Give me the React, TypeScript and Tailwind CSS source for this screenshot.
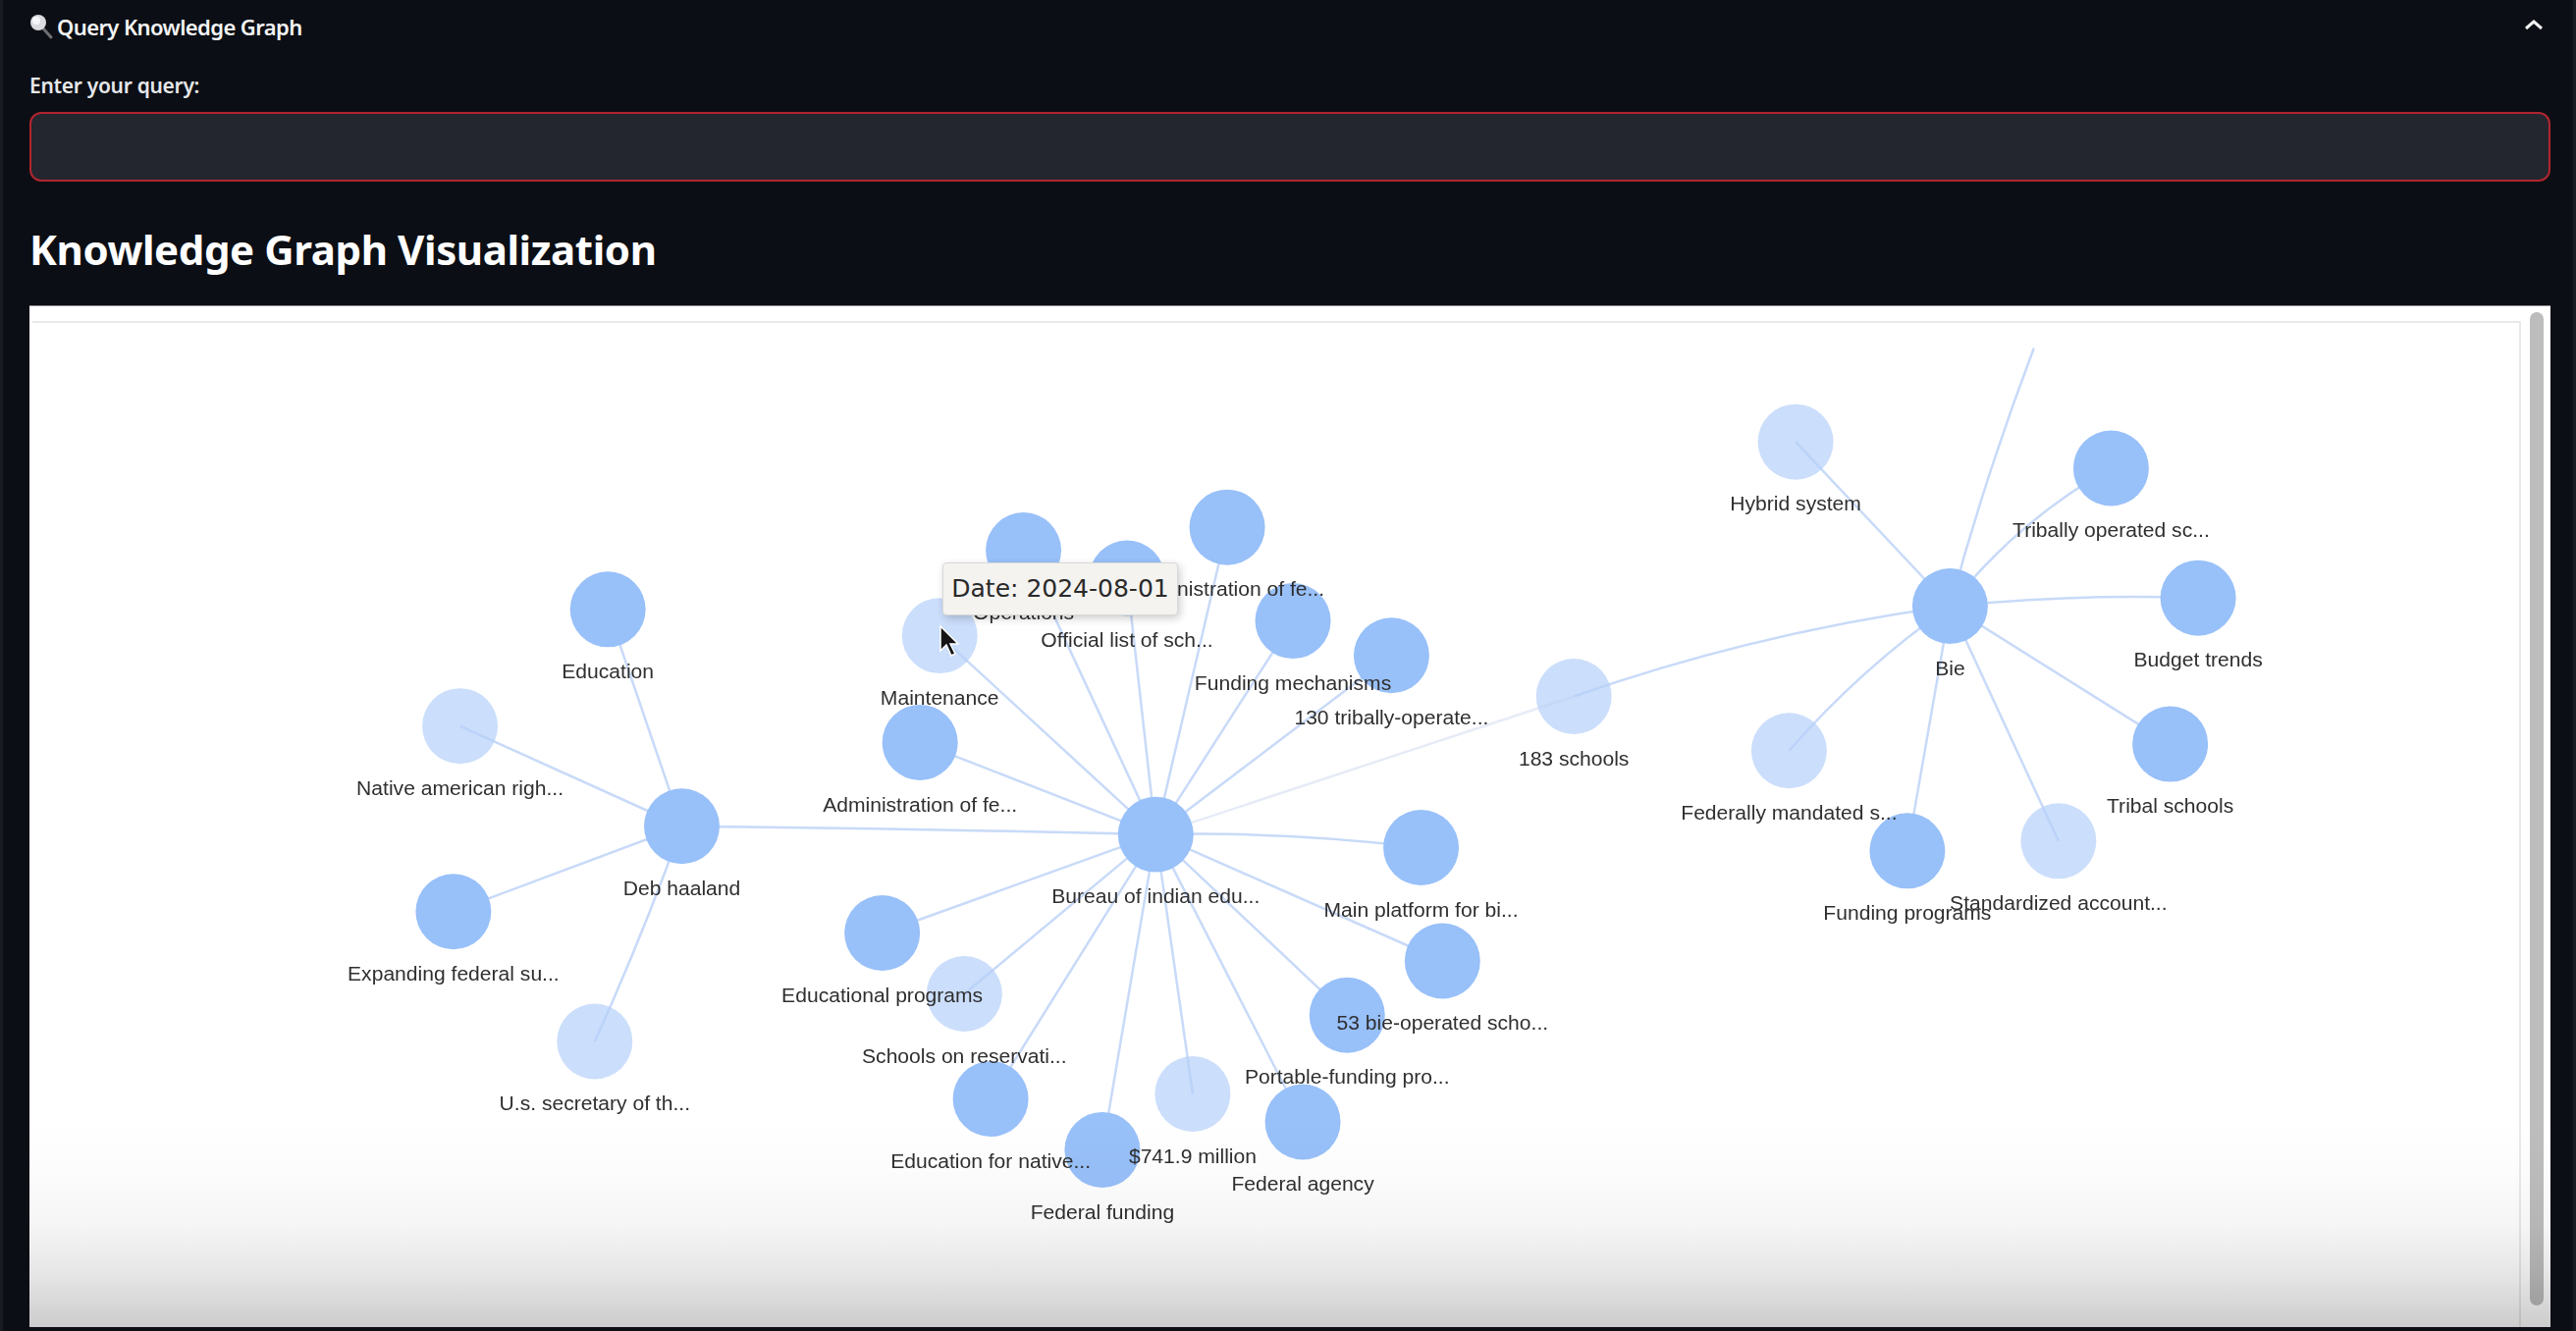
import React from "react";

const S = 2624 / 1568;
type P = { x: number; y: number };
type N = P & { t: string; light?: boolean; c?: number };

const bureau: N = { x: 703.5, y: 508, t: "Bureau of indian edu..." };
const deb: N = { x: 415, y: 503, t: "Deb haaland" };
const bie: N = { x: 1187, y: 369, t: "Bie" };
const schools: N = { x: 958, y: 424, t: "183 schools", light: true };

const bureauKids: N[] = [
  { x: 623, y: 335, t: "Operations" },
  { x: 686, y: 352, t: "Official list of sch..." },
  { x: 747, y: 321, t: "Administration of fe..." },
  { x: 787, y: 378, t: "Funding mechanisms" },
  { x: 847, y: 399, t: "130 tribally-operate..." },
  { x: 572, y: 387, t: "Maintenance", light: true },
  { x: 560, y: 452, t: "Administration of fe..." },
  { x: 865, y: 516, t: "Main platform for bi...", c: -6 },
  { x: 878, y: 585, t: "53 bie-operated scho..." },
  { x: 820, y: 618, t: "Portable-funding pro..." },
  { x: 793, y: 683, t: "Federal agency" },
  { x: 726, y: 666, t: "$741.9 million", light: true },
  { x: 671, y: 700, t: "Federal funding" },
  { x: 603, y: 669, t: "Education for native..." },
  { x: 587, y: 605, t: "Schools on reservati...", light: true },
  { x: 537, y: 568, t: "Educational programs" },
];
const debKids: N[] = [
  { x: 370, y: 371, t: "Education" },
  { x: 280, y: 442, t: "Native american righ...", light: true },
  { x: 276, y: 555, t: "Expanding federal su..." },
  { x: 362, y: 634, t: "U.s. secretary of th...", light: true, c: -3 },
];
const bieKids: N[] = [
  { x: 1093, y: 269, t: "Hybrid system", light: true },
  { x: 1285, y: 285, t: "Tribally operated sc...", c: -13 },
  { x: 1338, y: 364, t: "Budget trends", c: -5 },
  { x: 1321, y: 453, t: "Tribal schools" },
  { x: 1253, y: 512, t: "Standardized account...", light: true },
  { x: 1161, y: 518, t: "Funding programs" },
  { x: 1089, y: 457, t: "Federally mandated s...", light: true, c: 8 },
];

const nodes: N[] = [...bureauKids, ...debKids, ...bieKids, bureau, deb, bie, schools];

function curve(a: P, b: P, c = 0) {
  const mx = (a.x + b.x) / 2;
  const my = (a.y + b.y) / 2;
  const dx = b.x - a.x;
  const dy = b.y - a.y;
  const len = Math.hypot(dx, dy) || 1;
  return `M${a.x} ${a.y}Q${mx - (dy / len) * c} ${my + (dx / len) * c} ${b.x} ${b.y}`;
}

function Graph() {
  return (
    <svg width="2538" height="1025" viewBox="0 0 2538 1025" className="block blur-[0.6px]">
      <g transform={`translate(-33 -329) scale(${S})`}>
        <g fill="none" stroke="#c8daf8" strokeWidth={1.5}>
          {bureauKids.map((k, i) => (
            <path key={i} d={curve(bureau, k, k.c)} />
          ))}
          {debKids.map((k, i) => (
            <path key={i} d={curve(deb, k, k.c)} />
          ))}
          {bieKids.map((k, i) => (
            <path key={i} d={curve(bie, k, k.c)} />
          ))}
          <path d={curve(deb, bureau, -1)} />
          <path d={curve(bureau, schools)} stroke="#e6ecf6" />
          <path d={curve(schools, bie, -12)} />
          <path d={curve(bie, { x: 1238, y: 212 }, -4)} />
        </g>
        {nodes.map((n, i) => (
          <circle
            key={i}
            cx={n.x}
            cy={n.y}
            r={23}
            fill={n.light ? "#b5d0fa" : "#98c0f9"}
            fillOpacity={n.light ? 0.7 : 1}
          />
        ))}
        {nodes.map((n, i) => (
          <text
            key={i}
            x={n.x}
            y={n.y + 42}
            textAnchor="middle"
            fontSize={12.6}
            fill="#2f2f2f"
            fontFamily="'Liberation Sans', Arial, sans-serif"
          >
            {n.t}
          </text>
        ))}
      </g>
    </svg>
  );
}

function Magnifier() {
  return (
    <svg width="24" height="26" viewBox="0 0 24 26" className="shrink-0">
      <path d="M14 15l8 9" stroke="#6f6f73" strokeWidth="3" strokeLinecap="round" />
      <circle cx="9" cy="9" r="8" fill="#d9dbe0" />
      <circle cx="7" cy="7" r="4" fill="#f4f5f7" />
    </svg>
  );
}

export default function App() {
  return (
    <div className="relative flex h-[1356px] w-[2624px] flex-col overflow-hidden border-x-[3px] border-[#191b21] bg-[#0b0e14] pb-[4px] pl-[27px] pr-[23px] font-['Noto_Sans',sans-serif]">
      <div className="flex h-[54px] shrink-0 items-center justify-between pr-[7px]">
        <div className="flex items-center gap-[4px] text-[22px] font-semibold tracking-[-0.6px] text-[#f4f4f5]">
          <Magnifier />
          <span>Query Knowledge Graph</span>
        </div>
        <svg width="20" height="12" viewBox="0 0 20 12" fill="none" className="mb-[4px]">
          <path d="M2 10l8-7 8 7" stroke="#f2f2f2" strokeWidth="3" />
        </svg>
      </div>
      <div className="mt-[20px] h-[26px] shrink-0 text-[21px] font-semibold leading-[26px] tracking-[-0.3px] text-[#e6e7ea]">
        Enter your query:
      </div>
      <div className="mt-[14px] h-[71px] shrink-0 rounded-[12px] border-2 border-[#b0252f] bg-[#24262f]" />
      <h2 className="mt-[41px] h-[55px] shrink-0 text-[42px] font-bold leading-[55px] tracking-[-0.4px] text-white">
        Knowledge Graph Visualization
      </h2>
      <div className="relative mt-[31px] flex min-h-0 flex-1 bg-white pl-[3px] shadow-[0_-1px_0_#8a8a8a]">
        <div className="h-full w-[2535px] pt-[15px]">
          <div className="h-full overflow-hidden border-t-2 border-r-2 border-[#e9e9e9]">
            <Graph />
          </div>
        </div>
        <div className="flex-1 pb-[22px] pl-[9px] pr-[7px] pt-[6px]">
          <div className="h-full w-[14px] rounded-full bg-[#bdbdbd]" />
        </div>
        <div className="pointer-events-none absolute inset-x-0 bottom-0 h-[210px] bg-[linear-gradient(to_bottom,rgba(0,0,0,0),rgba(0,0,0,0.015)_28%,rgba(0,0,0,0.04)_51%,rgba(0,0,0,0.1)_75%,rgba(0,0,0,0.2)_100%)]" />
      </div>

      <div className="absolute left-[957px] top-[573px] flex h-[54px] w-[240px] items-center justify-center rounded-[4px] border border-[#d8d8d6] bg-[#f4f3f0] font-['DejaVu_Sans',sans-serif] text-[25px] text-[#2a2a2a] shadow-[2px_3px_8px_rgba(0,0,0,0.2)]">
        Date: 2024-08-01
      </div>
      <svg className="absolute left-[952px] top-[636px]" width="22" height="34" viewBox="0 0 22 34">
        <path d="M3 2v25l6-6 5 11 4-2-5-10h8z" fill="#151515" stroke="#ffffff" strokeWidth="1.5" />
      </svg>
    </div>
  );
}
